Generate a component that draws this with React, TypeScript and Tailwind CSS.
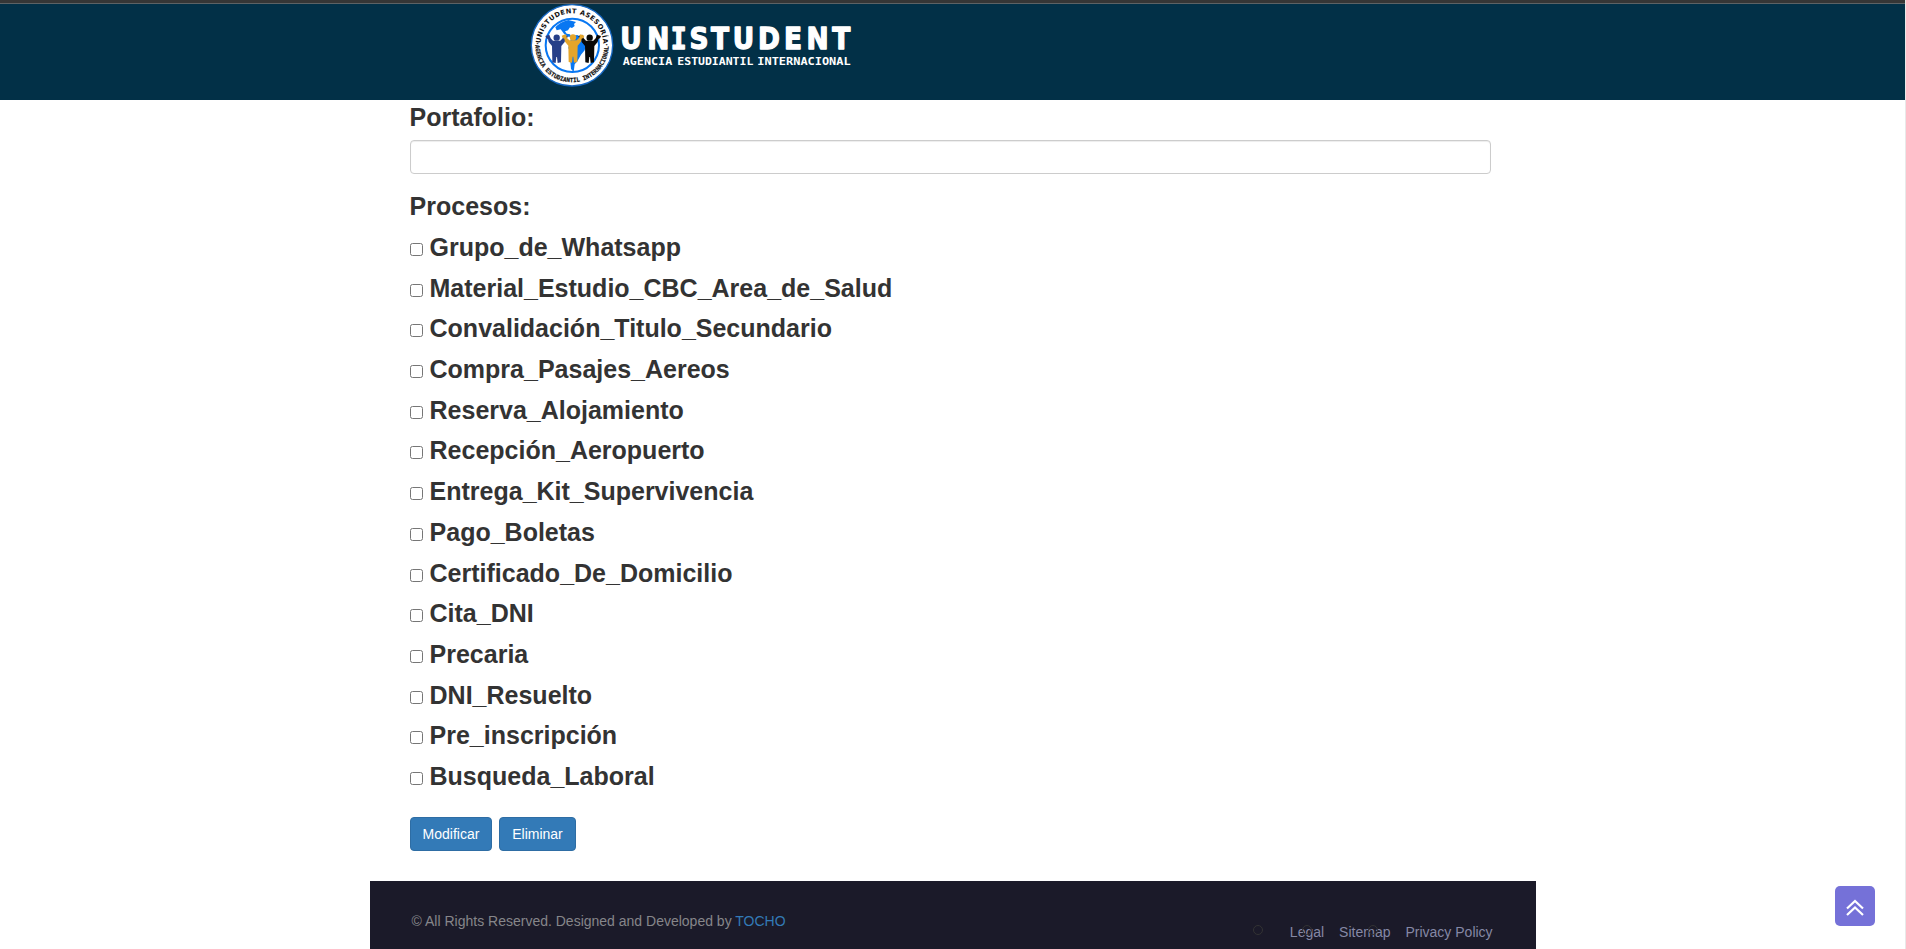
import React from "react";

const processes = [
  "Grupo_de_Whatsapp",
  "Material_Estudio_CBC_Area_de_Salud",
  "Convalidación_Titulo_Secundario",
  "Compra_Pasajes_Aereos",
  "Reserva_Alojamiento",
  "Recepción_Aeropuerto",
  "Entrega_Kit_Supervivencia",
  "Pago_Boletas",
  "Certificado_De_Domicilio",
  "Cita_DNI",
  "Precaria",
  "DNI_Resuelto",
  "Pre_inscripción",
  "Busqueda_Laboral",
];

function Person({ x, y, color }: { x: number; y: number; color: string }) {
  return (
    <g transform={`translate(${x} ${y})`} fill={color}>
      <circle cx="0" cy="2" r="9.5" />
      <path d="M-34 -3 L-22 -7 L-18 4 L-11 11 H11 L18 4 L22 -7 L34 -3 L31 4 L26 6 L24 15 L14 27 L13 76 L3 78 L1 60 H-1 L-3 78 L-13 76 L-14 27 L-24 15 L-26 6 L-31 4 Z" />
    </g>
  );
}

function Logo() {
  return (
    <svg className="block h-[96px] w-[340px]" viewBox="0 12 1020 288" role="img" aria-label="Unistudent">
      <defs>
        <path id="ring-top" d="M 62 134 A 94 94 0 0 1 250 134" />
        <path id="ring-bottom" d="M 47 122 A 110 110 0 1 0 265 122" />
      </defs>
      <circle cx="156" cy="136" r="122" fill="#fff" stroke="#1768c4" strokeWidth="4" />
      <circle cx="157" cy="136" r="80" fill="#fff" stroke="#0877f2" strokeWidth="6" />
      <g fill="#0877f2">
        <path d="M106 82 Q120 66 145 60 L168 66 L162 72 L164 78 L156 84 L150 82 L144 91 L135 94 L140 101 L150 103 L154 110 L145 110 L132 101 L122 88 L110 91 Z" />
        <path d="M155 107 L172 105 L188 115 L198 136 L194 151 L183 164 L172 184 L164 193 L161 216 L153 207 L151 185 L156 164 L145 144 Z" />
      </g>
      <Person x={110} y={111} color="#263f88" />
      <Person x={209} y={111} color="#080808" />
      <Person x={159} y={110} color="#e5a52b" />
      <g fontFamily="'DejaVu Sans', sans-serif" fontWeight="bold" fill="#111">
        <text fontSize="20">
          <textPath href="#ring-top" startOffset="4" textLength="288" lengthAdjust="spacing">
            UNISTUDENT ASESORÍA
          </textPath>
        </text>
        <text fontSize="18" fontFamily="'DejaVu Sans Mono', monospace" stroke="#111" strokeWidth="0.6">
          <textPath href="#ring-bottom" startOffset="3" textLength="366" lengthAdjust="spacingAndGlyphs">
            ·AGENCIA ESTUDIANTIL INTERNACIONAL·
          </textPath>
        </text>
      </g>
      <g fontFamily="'DejaVu Sans', sans-serif" fontWeight="bold" fill="#fff">
        <text
          transform="translate(0 146) scale(0.9 1)"
          fontSize="88"
          stroke="#fff"
          strokeWidth="4"
          strokeLinejoin="round"
          x="334.3 424.3 502.4 565 636.9 709 793.6 880 954.9 1040.5"
        >
          UN<tspan fontFamily="'DejaVu Sans Mono', monospace">I</tspan>STUDENT
        </text>
        <g fontSize="30" fontFamily="'DejaVu Sans Mono', monospace">
          <text x="308" y="195" textLength="149" lengthAdjust="spacingAndGlyphs">AGENCIA</text>
          <text x="472" y="195" textLength="228" lengthAdjust="spacingAndGlyphs">ESTUDIANTIL</text>
          <text x="712" y="195" textLength="280" lengthAdjust="spacingAndGlyphs">INTERNACIONAL</text>
        </g>
      </g>
    </svg>
  );
}

function FooterLink({ children }: { children: React.ReactNode }) {
  return (
    <li className="relative">
      <span className="absolute top-[3px] -left-[37px] size-[10px] rounded-full border border-[#333]" />
      <a href="#" className="relative">{children}</a>
    </li>
  );
}

export default function App() {
  return (
    <div className="h-[949px] overflow-hidden border-r border-[#e9e9e9] bg-white font-['Liberation_Sans',Arial,sans-serif] text-sm text-[#333]">
      <header className="h-[100px] border-t-[3px] border-[#363636] bg-[#023047]">
        <div className="h-px bg-[#5d6265]" />
        <div className="pl-[520px]">
          <Logo />
        </div>
      </header>

      <main className="ml-[370px] w-[1166px]">
        <form className="h-[781px] pr-10 pl-[39.6px] text-[25px] leading-[35.714px] font-bold" onSubmit={(e) => e.preventDefault()}>
          <label htmlFor="portfolio" className="mb-[4.4px] block">Portafolio:</label>
          <input
            id="portfolio"
            type="text"
            className="ml-[0.4px] block h-[34px] w-[1081px] rounded border border-[#ccc] px-3 text-sm font-normal shadow-[inset_0_1px_1px_rgba(0,0,0,0.075)]"
          />
          <p className="mt-[15px] mb-[5px]">Procesos:</p>
          {processes.map((name) => (
            <label key={name} className="mb-[5px] block">
              <input type="checkbox" className="mt-1 size-[13px] align-baseline" /> {name}
            </label>
          ))}
          <div className="mt-[22px] flex gap-[7px] pl-[0.4px] text-sm leading-5 font-normal text-white">
            <button className="h-[34px] w-[82px] rounded border border-[#2e6da4] bg-[#337ab7]">Modificar</button>
            <button className="h-[34px] w-[77px] rounded border border-[#2e6da4] bg-[#337ab7]">Eliminar</button>
          </div>
        </form>

        <footer className="flex h-[68px] justify-between bg-[#1b1a29] pr-[43.4px] pl-[41.6px] leading-5">
          <p className="pt-[30px] text-[#86868a]">
            © All Rights Reserved. Designed and Developed by <a href="#" className="text-[#337ab7]">TOCHO</a>
          </p>
          <ul className="flex gap-[15px] pt-[41px] text-[#8588a5]">
            <FooterLink>Legal</FooterLink>
            <FooterLink>Sitemap</FooterLink>
            <FooterLink>Privacy Policy</FooterLink>
          </ul>
        </footer>
      </main>

      <button aria-label="Volver arriba" className="fixed top-[886px] left-[1835px] flex size-10 items-center justify-center rounded-[5px] bg-[#7571d8]">
        <svg className="size-5" viewBox="0 0 20 20" fill="none" stroke="#fff" strokeWidth="2.2">
          <path d="M2 12.5 L10 5 L18 12.5 M2 19 L10 11.5 L18 19" />
        </svg>
      </button>
    </div>
  );
}
